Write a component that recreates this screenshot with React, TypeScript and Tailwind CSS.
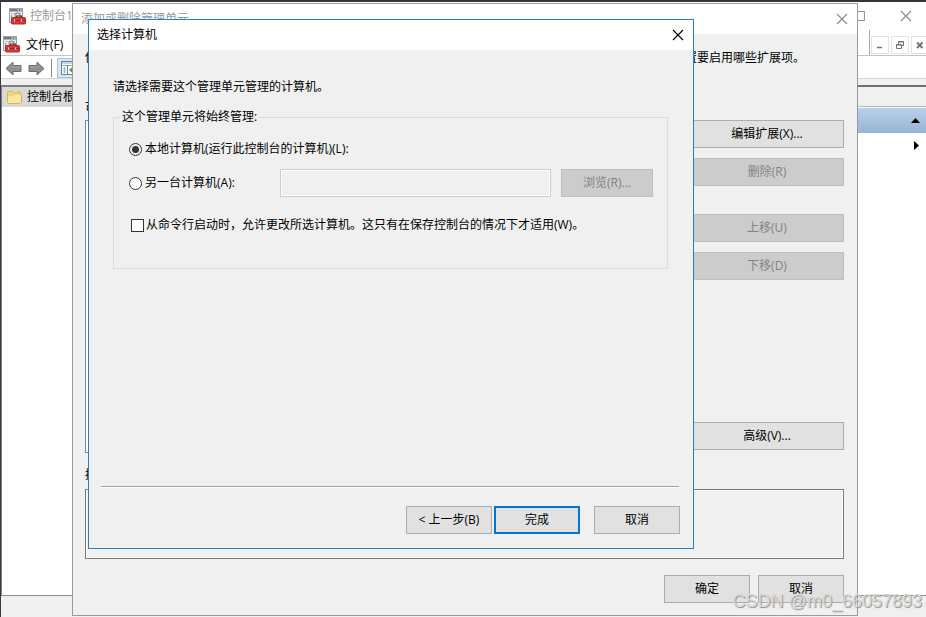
import React from "react";

const buttonBase = "h-7 border text-center text-xs leading-4";
const enabledButton = "border-[#adadad] bg-[#e1e1e1] text-black";
const disabledButton = "border-[#bfbfbf] bg-[#cccccc] text-[#838383]";

function PushButton({
  children,
  width = "w-[86px]",
  disabled = false,
  primary = false,
}: {
  children: React.ReactNode;
  width?: string;
  disabled?: boolean;
  primary?: boolean;
}) {
  const look = disabled
    ? disabledButton
    : primary
      ? "border-2 border-[#0078d7] bg-[#e1e1e1] text-black"
      : enabledButton;
  return (
    <button type="button" disabled={disabled} className={`${buttonBase} ${width} ${look}`}>
      {children}
    </button>
  );
}

function CloseIcon({ className }: { className: string }) {
  return (
    <svg viewBox="0 0 12 12" className={`size-3 ${className}`} fill="none" stroke="currentColor" strokeWidth="1.1">
      <path d="M1 1 11 11M11 1 1 11" />
    </svg>
  );
}

function ToolboxIcon() {
  return (
    <svg viewBox="0 0 17 17" className="size-[17px] shrink-0">
      <rect x="0.5" y="0.5" width="13" height="14" fill="#eceeef" stroke="#9aa0a5" />
      <path d="M1 1h12v2.500H1z" fill="#737b82" />
      <path d="M8.500 2h1.500M11 2h1.500" stroke="#fff" />
      <path d="M2 5.500h10" stroke="#b8bdc1" />
      <path d="M2.500 7v5" stroke="#8b9196" />
      <circle cx="8.500" cy="7.500" r="2.500" fill="#dce2e6" stroke="#6f777e" />
      <path d="M7.500 9.500V8h5v1.500" fill="none" stroke="#5d2020" strokeWidth="1.200" />
      <rect x="2.500" y="9.500" width="14" height="6.500" rx="1" fill="#d03a3a" stroke="#b8282b" />
      <path d="M3 12.500h13" stroke="#a52023" />
      <path d="M5.500 11.500v2M12.500 11.500v2" stroke="#f3dada" strokeWidth="1.300" />
    </svg>
  );
}

function ArrowIcon({ forward = false }: { forward?: boolean }) {
  return (
    <svg viewBox="0 0 17 15" className="h-[15px] w-[17px]">
      <path
        d={
          forward
            ? "M16 7.500 9 1v3.500H1v6h8V14Z"
            : "M1 7.500 8 1v3.500h8v6H8V14Z"
        }
        fill="#8f8f8f"
        stroke="#6c6c6c"
        strokeLinejoin="round"
      />
      <path d={forward ? "M2 6h8" : "M7 6h8"} stroke="#a9a9a9" />
    </svg>
  );
}

function TreePaneIcon() {
  return (
    <svg viewBox="0 0 17 14" className="h-[14px] w-[17px] shrink-0">
      <rect x="0.5" y="0.5" width="16" height="13" fill="#fff" stroke="#74818d" />
      <path d="M1 2h15M1 4.500h15" stroke="#9aa4ad" />
      <path d="M6.500 4v9.500" stroke="#74818d" />
      <path d="M2.500 7h2M2.500 9h2M2.500 11h2" stroke="#3976b5" />
      <path d="M8 9l4-3.500v2h4v3h-4v2Z" fill="#43a832" />
    </svg>
  );
}

function FolderIcon() {
  return (
    <svg viewBox="0 0 15 14" className="h-[14px] w-[15px] shrink-0">
      <path d="M0.500 2.500 1.500 1.500H6L7.500 3h6l1 1v8.500l-1 1h-12l-1-1Z" fill="#f3d374" stroke="#dcb64e" />
      <path d="M1 6h6l1.500-1.500H14V13H1Z" fill="#fae6a0" />
      <path d="M10 1.500h3V4" fill="none" stroke="#e1c362" />
    </svg>
  );
}

function MdiButton({ label, children }: { label: string; children: React.ReactNode }) {
  return (
    <button
      type="button"
      aria-label={label}
      className="flex size-[18px] shrink-0 items-center justify-center border border-[#e3e3e3] bg-white text-[#6d747c]"
    >
      <svg viewBox="0 0 8 8" className="size-2" fill="none" stroke="currentColor">
        {children}
      </svg>
    </button>
  );
}

function ConsoleWindow() {
  return (
    <div className="flex min-h-screen flex-col overflow-hidden border-l border-[#3a3a44] bg-[#f0f0f0]">
      <header className="border-t-2 border-[#34353c] bg-white">
        <div className="flex h-7 items-center justify-between pl-2 pr-[14px] text-[#9a9a9a]">
          <div className="flex items-center gap-1 whitespace-nowrap">
            <ToolboxIcon />
            <h1 className="text-xs">控制台1</h1>
          </div>
          <div className="flex items-center gap-[35px]">
            <button type="button" aria-label="最大化" className="size-[10px] border border-[#999999]" />
            <button type="button" aria-label="关闭">
              <CloseIcon className="text-[#888888]" />
            </button>
          </div>
        </div>
        <div className="flex h-[26px] items-stretch justify-between border-b border-[#c4c4c4]">
          <nav className="flex items-center gap-[6px] pl-[2px] pt-1">
            <ToolboxIcon />
            <button type="button" className="text-xs text-black">文件(F)</button>
          </nav>
          <div className="-mr-[3px] flex items-center gap-[2px] border-l border-[#a8a8a8] pl-[1px] pt-1">
            <MdiButton label="最小化子窗口"><path d="M1 6.500h5" strokeWidth="1.500" /></MdiButton>
            <MdiButton label="还原子窗口">
              <path d="M2.500 3V0.500h5v4H5.500M2 1h5.500M0.500 3.500h5v4h-5ZM0.500 4h5" />
            </MdiButton>
            <MdiButton label="关闭子窗口"><path d="M1 1.500l5.500 5.500M6.500 1.500 1 7" strokeWidth="1.900" /></MdiButton>
          </div>
        </div>
        <div className="flex h-[23px] items-center border-b border-[#d5d5d5] pl-1 pt-[2px]">
          <div className="flex items-center gap-[6px]">
            <button type="button" aria-label="后退"><ArrowIcon /></button>
            <button type="button" aria-label="前进"><ArrowIcon forward /></button>
          </div>
          <div className="ml-[6px] h-[18px] border-l border-[#8a8a8a]" />
          <button
            type="button"
            aria-label="显示/隐藏控制台树"
            className="ml-[5px] flex h-5 w-6 items-center justify-center border border-[#99c9ef] bg-[#d3e8f9]"
          >
            <TreePaneIcon />
          </button>
        </div>
      </header>
      <div className="mt-[6px] flex flex-1 border-b border-[#8c8c8c]">
        <aside className="w-48 border-l border-t-2 border-[#808080] bg-white">
          <div className="flex h-5 w-[120px] items-center gap-[5px] bg-[#d9d9d9] pl-[5px]">
            <FolderIcon />
            <span className="whitespace-nowrap text-xs">控制台根节点</span>
          </div>
        </aside>
        <main className="flex-1 border-t-2 border-[#6f6f6f] bg-white">
          <div className="h-5 border-b border-[#b5b5b5] bg-[#f0f0f0]" />
          <div className="mt-[1px] flex h-[25px] items-center justify-end bg-linear-to-b from-[#b9cfe9] to-[#98b5d6] pr-[6px]">
            <svg viewBox="0 0 9 5" className="h-[5px] w-[9px]"><path d="M0 5 4.500 0 9 5Z" /></svg>
          </div>
          <div className="flex h-6 items-center justify-end pr-[7px]">
            <svg viewBox="0 0 5 9" className="h-[9px] w-[5px]"><path d="M0 0 5 4.500 0 9Z" /></svg>
          </div>
        </main>
      </div>
      <footer className="h-[21px]" />
    </div>
  );
}

function SnapInWindow() {
  return (
    <section className="absolute left-[72px] top-[3px] w-[786px] border border-[#9b9b9b] bg-[#f0f0f0] text-xs">
      <header className="flex h-[30px] items-center justify-between bg-white pl-2 pr-[9px] text-[#999999]">
        <h2>添加或删除管理单元</h2>
        <button type="button" aria-label="关闭"><CloseIcon className="text-[#888888]" /></button>
      </header>
      <div className="pb-3 pl-3 pr-[13px] pt-4">
        <p className="whitespace-nowrap leading-4">
          你可以从计算机的可用管理单元中为此控制台选择管理单元，并配置所选管理单元。对可扩展管理单元，你可以配置要启用哪些扩展项。
        </p>
        <div className="mt-8 flex justify-between">
          <div className="w-[560px]">
            <label htmlFor="available" className="block pt-[2px] leading-4">可用的管理单元(S):</label>
            <select id="available" size={10} className="mt-1 block h-[333px] w-full border border-[#828790] bg-white" />
          </div>
          <div className="flex w-[154px] flex-col pt-[22px]">
            <div className="flex flex-col gap-[10px]">
              <PushButton width="w-full">编辑扩展(X)...</PushButton>
              <PushButton width="w-full" disabled>删除(R)</PushButton>
            </div>
            <div className="mt-7 flex flex-col gap-[10px]">
              <PushButton width="w-full" disabled>上移(U)</PushButton>
              <PushButton width="w-full" disabled>下移(D)</PushButton>
            </div>
            <div className="mt-[142px]">
              <PushButton width="w-full">高级(V)...</PushButton>
            </div>
          </div>
        </div>
        <div className="mt-[14px] leading-4">描述:</div>
        <div className="mt-[6px] h-[70px] border border-[#7a7a7a] ring-1 ring-inset ring-white" />
        <footer className="mt-4 flex justify-end gap-2">
          <PushButton>确定</PushButton>
          <PushButton>取消</PushButton>
        </footer>
      </div>
    </section>
  );
}

function ChooseComputerDialog() {
  return (
    <form
      role="dialog"
      aria-labelledby="dialog-title"
      onSubmit={(event) => event.preventDefault()}
      className="absolute left-[88px] top-[19px] w-[606px] border border-[#2680bf] bg-[#f0f0f0] text-xs"
    >
      <header className="flex h-[30px] items-center justify-between bg-white pl-2 pr-[9px]">
        <h2 id="dialog-title">选择计算机</h2>
        <button type="button" aria-label="关闭"><CloseIcon className="text-black" /></button>
      </header>
      <div className="pl-6 pr-[25px] pt-[29px]">
        <p className="leading-4">请选择需要这个管理单元管理的计算机。</p>
        <fieldset className="mt-[14px] h-[160px] border border-[#dcdcdc] pl-[15px] pr-[14px]">
          <legend className="-ml-[9px] px-[2px] leading-4">这个管理单元将始终管理:</legend>
          <label className="mt-4 flex items-center gap-[3px] leading-4">
            <input
              type="radio"
              name="target"
              defaultChecked
              className="size-[13px] appearance-none rounded-full border border-[#333333] bg-white checked:bg-[#333333] checked:bg-clip-content checked:p-[2px]"
            />
            本地计算机(运行此控制台的计算机)(L):
          </label>
          <div className="mt-3 flex items-center">
            <label className="flex w-[151px] items-center gap-[3px] leading-4">
              <input
                type="radio"
                name="target"
                className="size-[13px] appearance-none rounded-full border border-[#333333] bg-white checked:bg-[#333333] checked:bg-clip-content checked:p-[2px]"
              />
              另一台计算机(A):
            </label>
            <input
              type="text"
              aria-label="计算机名"
              disabled
              className="h-7 min-w-0 flex-1 border border-[#cccccc] bg-[#f0f0f0] px-1 ring-1 ring-inset ring-white"
            />
            <div className="ml-[10px] flex">
              <PushButton width="w-[92px]" disabled>浏览(R)...</PushButton>
            </div>
          </div>
          <label className="mt-5 flex items-center gap-[2px] pl-[2px] leading-4">
            <input type="checkbox" className="size-[13px] appearance-none border border-[#333333] bg-white checked:bg-[#333333]" />
            从命令行启动时，允许更改所选计算机。这只有在保存控制台的情况下才适用(W)。
          </label>
        </fieldset>
      </div>
      <div className="ml-3 mr-[14px] mt-[217px] border-b border-t border-b-white border-t-[#a0a0a0]" />
      <footer className="flex justify-end pb-[14px] pr-[13px] pt-[18px]">
        <div className="flex gap-[2px]">
          <PushButton>&lt; 上一步(B)</PushButton>
          <PushButton primary>完成</PushButton>
        </div>
        <div className="ml-[14px] flex">
          <PushButton>取消</PushButton>
        </div>
      </footer>
    </form>
  );
}

export default function App() {
  return (
    <div className="relative min-h-screen overflow-hidden font-['Open_Sans','Noto_Sans_CJK_SC',sans-serif] text-black">
      <ConsoleWindow />
      <SnapInWindow />
      <ChooseComputerDialog />
      <div className="absolute bottom-1 right-1 font-['Liberation_Sans',sans-serif] text-lg leading-6 text-[#d8d8d8] [text-shadow:1px_1px_1px_#909090]">
        CSDN @m0_66057893
      </div>
    </div>
  );
}
